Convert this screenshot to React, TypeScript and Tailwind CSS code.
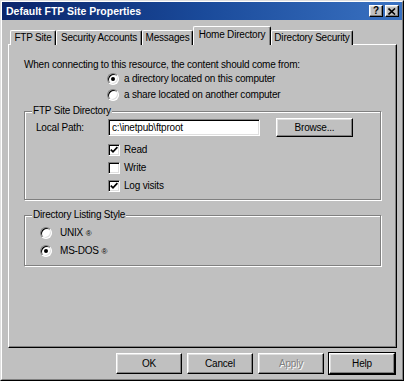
const raised =
  "border border-t-white border-l-white border-r-black border-b-black shadow-[inset_-1px_-1px_0_#808080,inset_1px_1px_0_#dfdfdf]";
const sunken =
  "border border-t-[#808080] border-l-[#808080] border-r-white border-b-white shadow-[inset_1px_1px_0_#000,inset_-1px_-1px_0_#dfdfdf]";
const etched = "border border-[#808080] shadow-[inset_1px_1px_0_#fff,1px_1px_0_#fff]";

function Radio({ checked }: { checked?: boolean }) {
  return (
    <div
      className={`w-[12px] h-[12px] shrink-0 rounded-full bg-white flex items-center justify-center ${sunken}`}
    >
      {checked && <div className="w-[4px] h-[4px] rounded-full bg-black" />}
    </div>
  );
}

function Check({ checked }: { checked?: boolean }) {
  return (
    <div className={`w-[12px] h-[12px] shrink-0 bg-white flex items-center justify-center ${sunken}`}>
      {checked && (
        <svg width="10" height="10" viewBox="0 0 10 10">
          <polyline points="1.8,4.6 4,6.8 8.4,2.2" fill="none" stroke="#000" strokeWidth="1.7" />
        </svg>
      )}
    </div>
  );
}

function Tab({ label, width, active }: { label: string; width: number; active?: boolean }) {
  return (
    <div
      style={{ width }}
      className={`flex items-center justify-center rounded-t-[2px] border-t border-l border-r border-t-white border-l-white border-r-black shadow-[inset_-1px_0_0_#808080] ${
        active ? "h-[19px] bg-[#c0c0c0] relative z-10 pb-[2px]" : "h-[15px] bg-[#c0c0c0]"
      }`}
    >
      {label}
    </div>
  );
}

function Button({ label, disabled, focus }: { label: string; disabled?: boolean; focus?: boolean }) {
  return (
    <div
      className={`w-[66px] h-[21px] flex items-center justify-center ${
        focus ? "outline outline-1 outline-black" : ""
      } ${raised} ${disabled ? "text-[#808080] [text-shadow:1px_1px_0_#fff]" : ""}`}
    >
      {label}
    </div>
  );
}

export default function App() {
  return (
    <div className="w-[404px] h-[381px] bg-[#c0c0c0] font-['Liberation_Sans',Arial,sans-serif] text-[10px] leading-[12px] tracking-[-0.2px] text-black border border-t-[#dfdfdf] border-l-[#dfdfdf] border-r-black border-b-black">
      <div className="h-full border border-t-white border-l-white border-r-[#808080] border-b-[#808080] flex flex-col">
        {/* title bar */}
        <div className="h-[18px] bg-gradient-to-r from-[#0a246a] via-[#1a4a9a] to-[#3a72c2] flex items-center pl-[4px] pr-[3px]">
          <span className="text-white font-bold text-[10.5px] tracking-normal">Default FTP Site Properties</span>
          <div className="ml-auto flex gap-[2px]">
            <div className={`w-[14px] h-[12px] bg-[#c0c0c0] flex items-center justify-center font-bold text-[10px] leading-none ${raised}`}>
              ?
            </div>
            <div className={`w-[14px] h-[12px] bg-[#c0c0c0] flex items-center justify-center ${raised}`}>
              <svg width="8" height="7" viewBox="0 0 8 7">
                <path d="M0.5 0.5 L7 6.5 M7 0.5 L0.5 6.5" stroke="#000" strokeWidth="1.6" />
              </svg>
            </div>
          </div>
        </div>

        <div className="px-[6px] flex flex-col">
          {/* tabs */}
          <div className="mt-[6px] ml-[2px] flex items-end -mb-[1px] relative z-10">
            <Tab label="FTP Site" width={46} />
            <Tab label="Security Accounts" width={86} />
            <Tab label="Messages" width={51} />
            <Tab label="Home Directory" width={78} active />
            <Tab label="Directory Security" width={82} />
          </div>

          {/* panel */}
          <div className="w-[389px] h-[304px] border border-t-white border-l-white border-r-black border-b-black shadow-[inset_-1px_-1px_0_#808080] pt-[14px] pl-[15px]">
            <div>When connecting to this resource, the content should come from:</div>
            <div className="ml-[83px] flex items-center gap-[5px] h-[16px]">
              <Radio checked />
              <span>a directory located on this computer</span>
            </div>
            <div className="ml-[83px] flex items-center gap-[5px] h-[16px]">
              <Radio />
              <span>a share located on another computer</span>
            </div>

            {/* FTP Site Directory */}
            <div className={`relative mt-[8px] w-[357px] h-[89px] pt-[6px] ${etched}`}>
              <span className="absolute -top-[7px] left-[7px] bg-[#c0c0c0] px-[1px]">FTP Site Directory</span>
              <div className="flex items-center h-[19px] pl-[11px]">
                <span className="w-[72px]">Local Path:</span>
                <div className={`w-[152px] h-[17px] bg-white flex items-center pl-[3px] ${sunken}`}>
                  c:\inetpub\ftproot
                </div>
                <div className="ml-[16px]">
                  <div className={`w-[77px] h-[19px] flex items-center justify-center ${raised}`}>Browse...</div>
                </div>
              </div>
              <div className="mt-[4px] pl-[83px] flex flex-col">
                <div className="flex items-center gap-[4px] h-[18px]">
                  <Check checked />
                  <span>Read</span>
                </div>
                <div className="flex items-center gap-[4px] h-[18px]">
                  <Check />
                  <span>Write</span>
                </div>
                <div className="flex items-center gap-[4px] h-[18px]">
                  <Check checked />
                  <span>Log visits</span>
                </div>
              </div>
            </div>

            {/* Directory Listing Style */}
            <div className={`relative mt-[15px] w-[357px] h-[51px] pt-[8px] pl-[15px] ${etched}`}>
              <span className="absolute -top-[7px] left-[7px] bg-[#c0c0c0] px-[1px]">Directory Listing Style</span>
              <div className="flex items-center gap-[8px] h-[18px]">
                <Radio />
                <span>
                  UNIX <span className="text-[8px]">®</span>
                </span>
              </div>
              <div className="flex items-center gap-[8px] h-[18px]">
                <Radio checked />
                <span>
                  MS-DOS <span className="text-[8px]">®</span>
                </span>
              </div>
            </div>
          </div>

          {/* buttons */}
          <div className="mt-[5px] flex justify-end gap-[5px] pr-[1px]">
            <Button label="OK" />
            <Button label="Cancel" />
            <Button label="Apply" disabled />
            <Button label="Help" focus />
          </div>
        </div>
      </div>
    </div>
  );
}
